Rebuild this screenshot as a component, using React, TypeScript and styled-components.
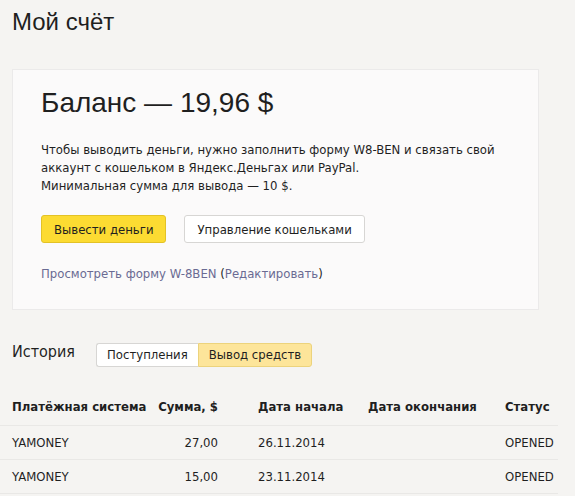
import React from 'react';
import styled, { createGlobalStyle } from 'styled-components';

const GlobalStyle = createGlobalStyle`
    body {
        margin: 0;
        background: #f5f4f2;
        font-family: 'DejaVu Sans Condensed', 'DejaVu Sans', sans-serif;
        color: #1f1f1f;
    }
`;

// STYLE
const Page = styled.div`
    width: 575px;
    min-height: 496px;
    overflow: hidden;
`;

const Title = styled.h1`
    margin: 0;
    padding: 7px 12px 0;
    font-family: 'Liberation Sans', sans-serif;
    font-weight: 400;
    font-size: 24px;
    line-height: 30px;
`;

const Card = styled.div`
    margin: 32px 0 0 12px;
    width: 527px;
    box-sizing: border-box;
    padding: 15px 28px 26px;
    background: #fbfafa;
    border: 1px solid #ebeaea;
`;

const Balance = styled.h2`
    margin: 0;
    font-family: 'Liberation Sans', sans-serif;
    font-weight: 400;
    font-size: 28px;
    line-height: 36px;
`;

const Text = styled.p`
    margin: 20px 0 0;
    font-size: 13px;
    line-height: 18px;
`;

const Buttons = styled.div`
    display: flex;
    gap: 18px;
    margin-top: 20px;
`;

const Button = styled.button<{ $primary?: boolean }>`
    height: 28px;
    padding: 0 12px;
    font-family: inherit;
    font-size: 13px;
    color: #1f1f1f;
    border-radius: 3px;
    background: ${(p) => (p.$primary ? '#fcdb32' : '#fff')};
    border: 1px solid ${(p) => (p.$primary ? '#e3c226' : '#d7d6d4')};
`;

const LinkLine = styled.div`
    margin-top: 22px;
    font-size: 13px;
    line-height: 18px;
`;

const Link = styled.a`
    color: #6a6b93;
    text-decoration: none;
`;

const HistoryHead = styled.div`
    display: flex;
    align-items: flex-start;
    gap: 21px;
    margin: 32px 0 0 12px;
`;

const HistoryTitle = styled.h3`
    margin: 0;
    font-weight: 400;
    font-size: 16px;
    line-height: 20px;
`;

const Tabs = styled.div`
    display: flex;
    margin-top: 1px;
`;

const Tab = styled.div<{ $active?: boolean }>`
    height: 22px;
    line-height: 22px;
    padding: 0 10px;
    font-size: 13px;
    background: ${(p) => (p.$active ? '#fde59a' : '#fff')};
    border: 1px solid ${(p) => (p.$active ? '#ecd37c' : '#d7d6d4')};
    &:first-child {
        border-radius: 3px 0 0 3px;
        border-right: none;
    }
    &:last-child {
        border-radius: 0 3px 3px 0;
    }
`;

const Table = styled.table`
    margin-top: 20px;
    width: 558px;
    table-layout: fixed;
    border-collapse: collapse;
    font-size: 13px;
`;

const Col = styled.col<{ $w: number }>`
    width: ${(p) => p.$w}px;
`;

const Th = styled.th<{ $right?: boolean }>`
    text-align: ${(p) => (p.$right ? 'right' : 'left')};
    font-weight: 700;
    padding: 0 ${(p) => (p.$right ? 28 : 0)}px 0 ${(p) => (p.$right ? 0 : 12)}px;
    height: 38px;
    border-bottom: 1px solid #e9e8e6;
    white-space: nowrap;
`;

const Td = styled.td<{ $right?: boolean }>`
    text-align: ${(p) => (p.$right ? 'right' : 'left')};
    padding: 0 ${(p) => (p.$right ? 28 : 0)}px 0 ${(p) => (p.$right ? 0 : 12)}px;
    height: 33px;
    border-bottom: 1px solid #e9e8e6;
    white-space: nowrap;
`;

const rows = [
    { system: 'YAMONEY', sum: '27,00', start: '26.11.2014', end: '', status: 'OPENED' },
    { system: 'YAMONEY', sum: '15,00', start: '23.11.2014', end: '', status: 'OPENED' },
];

const App: React.FC = () => {
    return (
        <Page>
            <GlobalStyle />
            <Title>Мой счёт</Title>

            {/* SECTION :: BALANCE */}
            <Card>
                <Balance>Баланс — 19,96 $</Balance>
                <Text>
                    Чтобы выводить деньги, нужно заполнить форму W8-BEN и связать свой аккаунт с кошельком в
                    Яндекс.Деньгах или PayPal.
                    <br />
                    Минимальная сумма для вывода — 10 $.
                </Text>
                <Buttons>
                    <Button $primary>Вывести деньги</Button>
                    <Button>Управление кошельками</Button>
                </Buttons>
                <LinkLine>
                    <Link href="#">Просмотреть форму W-8BEN</Link> (<Link href="#">Редактировать</Link>)
                </LinkLine>
            </Card>

            {/* SECTION :: HISTORY */}
            <HistoryHead>
                <HistoryTitle>История</HistoryTitle>
                <Tabs>
                    <Tab>Поступления</Tab>
                    <Tab $active>Вывод средств</Tab>
                </Tabs>
            </HistoryHead>

            <Table>
                <colgroup>
                    <Col $w={150} />
                    <Col $w={96} />
                    <Col $w={110} />
                    <Col $w={137} />
                    <Col $w={65} />
                </colgroup>
                <thead>
                    <tr>
                        <Th>Платёжная система</Th>
                        <Th $right>Сумма, $</Th>
                        <Th>Дата начала</Th>
                        <Th>Дата окончания</Th>
                        <Th>Статус</Th>
                    </tr>
                </thead>
                <tbody>
                    {rows.map((r, i) => (
                        <tr key={i}>
                            <Td>{r.system}</Td>
                            <Td $right>{r.sum}</Td>
                            <Td>{r.start}</Td>
                            <Td>{r.end}</Td>
                            <Td>{r.status}</Td>
                        </tr>
                    ))}
                </tbody>
            </Table>
        </Page>
    );
};
export default App;
